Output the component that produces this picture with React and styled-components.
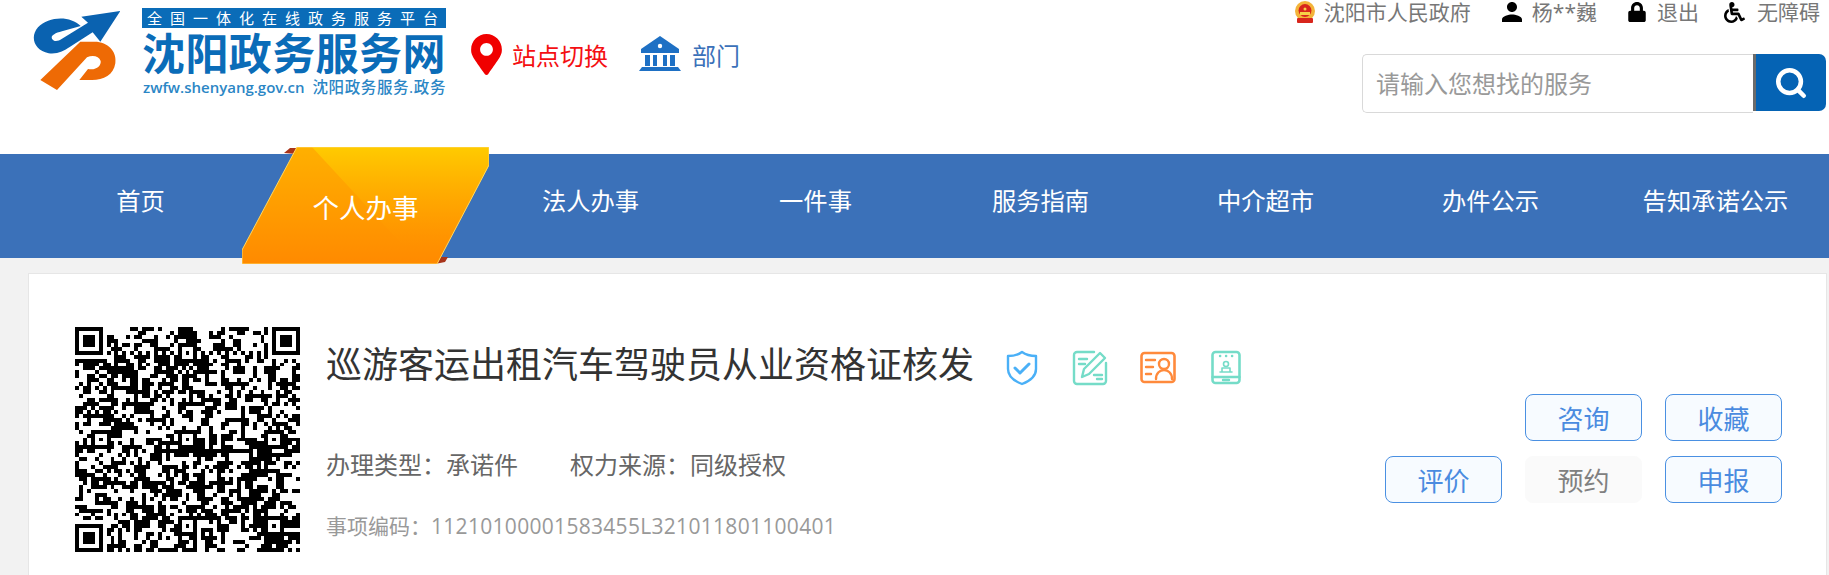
import React, { useMemo } from "react";
import styled, { createGlobalStyle } from "styled-components";
import { FaLock, FaWheelchair, FaMapMarkerAlt } from "react-icons/fa";
import { MdPerson } from "react-icons/md";
import { Search } from "lucide-react";

const Global = createGlobalStyle`
  html, body { margin: 0; padding: 0; height: 575px; overflow: hidden; background: #f2f2f2; }
  * { box-sizing: border-box; }
  body { font-family: "Open Sans", "Noto Sans CJK SC", sans-serif; }
`;

const Page = styled.div`width: 1829px; height: 575px; overflow: hidden;`;
const Header = styled.header`
  height: 154px; background: #fff; display: flex; justify-content: space-between;
  padding: 8px 3px 0 32px;
`;
const LeftGroup = styled.div`display: flex; align-items: flex-start;`;
const Logo = styled.div`display: flex; gap: 22px; width: 434px;`;
const LogoText = styled.div`display: flex; flex-direction: column; width: 304px;`;
const Banner = styled.div`
  height: 20px; background: #0a6cb8; color: #fff; font-size: 15px; line-height: 20px;
  letter-spacing: 8px; padding-left: 5px; white-space: nowrap;
`;
const SiteName = styled.div`
  font-size: 43px; line-height: 44px; font-weight: 700; color: #0a6cb8; white-space: nowrap; margin-top: 4px; letter-spacing: 0.4px;
`;
const SubLine = styled.div`
  display: flex; justify-content: space-between; color: #2b86c5; font-size: 15px; line-height: 18px;
  white-space: nowrap; margin-top: 2px; padding-left: 1px; font-weight: 600;
`;
const SubCn = styled.span`font-size: 15.5px; font-weight: 500; letter-spacing: 0.6px;`;
const SiteSwitch = styled.div`
  display: flex; align-items: center; gap: 5px; color: #f40f12; font-size: 24px; margin-top: 24px; width: 173px; height: 44px;
`;
const Dept = styled.div`
  display: flex; align-items: center; gap: 11px; color: #3b71b9; font-size: 24px; margin-top: 24px; height: 44px;
`;
const RightGroup = styled.div`display: flex; flex-direction: column; align-items: flex-end; margin-top: -8px;`;
const TopLinks = styled.div`display: flex; align-items: center; height: 24px; margin-right: 6px;`;
const TopLink = styled.span`
  display: inline-flex; align-items: center; gap: ${p => p.$gap || 8}px; color: #777; font-size: 21px; line-height: 24px;
  margin-left: ${p => p.$ml || 0}px; white-space: nowrap;
`;
const SearchBox = styled.div`display: flex; margin-top: 30px; height: 59px;`;
const SearchInput = styled.div`
  width: 391px; height: 59px; border: 1px solid #d9d9d9; border-right: none; border-radius: 5px 0 0 5px;
  color: #999; font-size: 24px; line-height: 57px; padding-left: 13px; background: #fff;
`;
const SearchBtn = styled.div`
  width: 73px; height: 57px; background: #0563b4; border-left: 3px solid #6b6b6b; border-radius: 0 7px 7px 0;
  display: flex; align-items: center; justify-content: center; color: #fff;
`;
const Nav = styled.nav`
  height: 104px; background: #3b71b9; display: grid; grid-template-columns: repeat(8, 225px); padding-left: 28px;
`;
const NavItem = styled.div`
  position: relative; display: flex; justify-content: center; align-items: center; color: #fff;
  font-size: ${p => (p.$active ? 26.5 : 24.3)}px; padding-bottom: ${p => (p.$active ? 0 : 13)}px; white-space: nowrap;
`;
const NavLabel = styled.span`position: relative; z-index: 1;`;
const ActiveShape = styled.svg`position: absolute; left: -11px; top: -7px; width: 247px; height: 117px;`;
const Main = styled.main`padding: 15px 2px 0 28px;`;
const Card = styled.section`
  height: 320px; background: #fff; border: 1px solid #e6e6e6; padding: 53px 44px 0 46px; display: flex;
`;
const QrWrap = styled.svg`width: 225px; height: 225px; flex: none; display: block;`;
const Info = styled.div`margin-left: 26px; flex: 1;`;
const TitleRow = styled.div`display: flex; align-items: center; height: 76px;`;
const Title = styled.h1`margin: 0; font-size: 36px; font-weight: 400; color: #333; line-height: 76px; white-space: nowrap;`;
const Badges = styled.div`display: flex; align-items: center; margin: 6px 0 0 30px;`;
const Badge = styled.svg`width: ${p => p.$w || 36}px; height: 36px; margin-right: ${p => p.$mr ?? 32}px; display: block; flex: none;`;
const Meta = styled.div`display: flex; gap: 52px; color: #666; font-size: 24px; line-height: 34px; margin-top: 45px;`;
const Code = styled.div`color: #999; font-size: 21px; line-height: 30px; margin-top: 29px; white-space: nowrap;`;
const CodeNumber = styled.span`letter-spacing: 0.3px;`;
const Actions = styled.div`
  width: 396px; flex: none; display: grid; grid-template-columns: repeat(3, 117px); gap: 15px 23px;
  align-content: start; justify-content: end; margin-top: 67px;
`;
const ActionBtn = styled.div`
  height: 47px; border-radius: 8px; display: flex; align-items: center; justify-content: center; font-size: 26px;
  grid-column: ${p => p.$col || "auto"};
  border: 1px solid ${p => (p.$off ? "#fafafa" : "#4a90e2")};
  background: ${p => (p.$off ? "#fafafa" : "#f7fbff")};
  color: ${p => (p.$off ? "#808080" : "#4a8be0")};
`;

function buildQr() {
  const n = 57;
  const m = Array.from({ length: n }, () => Array(n).fill(null));
  const finder = (x, y) => {
    for (let j = -1; j < 8; j++) for (let i = -1; i < 8; i++) {
      const a = x + i, b = y + j;
      if (a < 0 || b < 0 || a >= n || b >= n) continue;
      const inside = i >= 0 && i < 7 && j >= 0 && j < 7;
      const ring = i === 0 || i === 6 || j === 0 || j === 6;
      const core = i >= 2 && i <= 4 && j >= 2 && j <= 4;
      m[b][a] = inside && (ring || core);
    }
  };
  finder(0, 0); finder(n - 7, 0); finder(0, n - 7);
  for (const cy of [6, 28, 50]) for (const cx of [6, 28, 50]) {
    if ((cx === 6 && cy === 6) || (cx === 50 && cy === 6) || (cx === 6 && cy === 50)) continue;
    for (let j = -2; j <= 2; j++) for (let i = -2; i <= 2; i++) {
      m[cy + j][cx + i] = Math.max(Math.abs(i), Math.abs(j)) !== 1;
    }
  }
  for (let i = 8; i < n - 8; i++) { if (m[6][i] === null) m[6][i] = i % 2 === 0; if (m[i][6] === null) m[i][6] = i % 2 === 0; }
  let s = 20240611;
  const rnd = () => { s = (s * 1664525 + 1013904223) >>> 0; return (s >>> 16) / 65536; };
  for (let y = 0; y < n; y++) for (let x = 0; x < n; x++) {
    if (m[y][x] !== null) continue;
    const left = x > 0 ? m[y][x - 1] : false;
    const up = y > 0 ? m[y - 1][x] : false;
    const p = 0.36 + (left ? 0.14 : 0) + (up ? 0.14 : 0);
    m[y][x] = rnd() < p;
  }
  let d = "";
  for (let y = 0; y < n; y++) for (let x = 0; x < n; x++) if (m[y][x]) d += `M${x} ${y}h1v1h-1z`;
  return d;
}

const Qr = () => {
  const d = useMemo(buildQr, []);
  return (
    <QrWrap viewBox="0 0 57 57" shapeRendering="crispEdges"><rect width="57" height="57" fill="#fff" /><path d={d} fill="#000" /></QrWrap>
  );
};

const Emblem = () => (
  <svg width="88" height="84" viewBox="90 27 264 252" style={{ flex: "none", marginTop: 1 }}>
    <path d="M355 33 L238 50 L258 68 L180 116 C168 124 156 126 150 116 C146 108 156 100 180 94 L236 78 C205 46 140 48 108 82 C82 112 98 152 140 160 C165 164 187 152 202 142 L272 97 L295 125 Z" fill="#0a62b0" />
    <path d="M115 240 L235 125 L285 125 C325 130 345 160 340 190 C335 225 305 240 270 240 L232 240 L258 207 C283 212 298 197 296 183 C291 168 272 164 255 172 L165 270 Z" fill="#ee6a05" />
  </svg>
);

const BankIcon = () => (
  <svg width="42" height="36" viewBox="0 0 42 36" style={{ display: "block", flex: "none" }} fill="#1e70c4">
    <path d="M21 0 L40 13 V17 H2 V13 Z" />
    <rect x="6" y="19" width="5" height="11" />
    <rect x="14" y="19" width="4" height="11" />
    <rect x="24" y="19" width="4" height="11" />
    <rect x="31" y="19" width="5" height="11" />
    <path d="M3 31 H39 L42 35 H0 Z" />
    <circle cx="21" cy="10" r="2.2" fill="#fff" />
  </svg>
);

const NationalEmblem = () => (
  <svg width="22" height="23" viewBox="0 0 22 23" style={{ display: "block", marginRight: 8 }}>
    <circle cx="11" cy="10" r="10" fill="#f3b43a" />
    <circle cx="11" cy="9.5" r="6.5" fill="#d8261c" />
    <circle cx="11" cy="8" r="1.5" fill="#f6d048" />
    <rect x="6" y="11" width="10" height="3" fill="#f6d048" />
    <rect x="3" y="17" width="16" height="5" rx="1" fill="#d8261c" />
  </svg>
);

const ic = { fill: "none", strokeWidth: 2.4, strokeLinecap: "round", strokeLinejoin: "round" };

export default function App() {
  const navItems = ["首页", "个人办事", "法人办事", "一件事", "服务指南", "中介超市", "办件公示", "告知承诺公示"];
  return (
    <Page>
      <Global />
      <Header>
        <LeftGroup>
          <Logo>
            <Emblem />
            <LogoText>
              <Banner>全国一体化在线政务服务平台</Banner>
              <SiteName>沈阳政务服务网</SiteName>
              <SubLine>zwfw.shenyang.gov.cn<SubCn>沈阳政务服务.政务</SubCn></SubLine>
            </LogoText>
          </Logo>
          <SiteSwitch><FaMapMarkerAlt size={41} color="#f00000" />站点切换</SiteSwitch>
          <Dept><BankIcon />部门</Dept>
        </LeftGroup>
        <RightGroup>
          <TopLinks>
            <NationalEmblem />
            <TopLink>沈阳市人民政府</TopLink>
            <TopLink $ml={29} $gap={8}><MdPerson size={30} color="#000" style={{ margin: "0 -3px" }} />杨**巍</TopLink>
            <TopLink $ml={30} $gap={10}><FaLock size={20} color="#000" />退出</TopLink>
            <TopLink $ml={25} $gap={12}><FaWheelchair size={21} color="#000" />无障碍</TopLink>
          </TopLinks>
          <SearchBox>
            <SearchInput>请输入您想找的服务</SearchInput>
            <SearchBtn><Search size={34} strokeWidth={3.2} /></SearchBtn>
          </SearchBox>
        </RightGroup>
      </Header>
      <Nav>
        {navItems.map((t, i) => (
          <NavItem key={t} $active={i === 1}>
            {i === 1 && (
              <ActiveShape viewBox="0 0 247 117">
                <defs>
                  <linearGradient id="ga" x1="0" y1="0" x2="0" y2="1"><stop offset="0" stopColor="#ffb000" /><stop offset="1" stopColor="#ff8a00" /></linearGradient>
                  <linearGradient id="gb" x1="0" y1="0" x2="0" y2="1"><stop offset="0" stopColor="#ffcb00" /><stop offset="0.85" stopColor="#ff9a00" stopOpacity="0" /></linearGradient>
                </defs>
                <path d="M42 6 L48 1 L58 1 L54 7 Z" fill="#a8341a" />
                <path d="M190 110 L206 110 L203 115 L193 117 Z" fill="#a8341a" />
                <path d="M55 0 H247 V18 L195 117 H0 V103 Z" fill="url(#ga)" />
                <path d="M70 0 H247 V18 L195 117 H178 Z" fill="url(#gb)" />
                <path d="M55 0 H247 V18 L195 117 H0 V103 Z" fill="none" stroke="#ffd75e" strokeWidth="1" />
              </ActiveShape>
            )}
            <NavLabel>{t}</NavLabel>
          </NavItem>
        ))}
      </Nav>
      <Main>
        <Card>
          <Qr />
          <Info>
            <TitleRow>
              <Title>巡游客运出租汽车驾驶员从业资格证核发</Title>
              <Badges>
                <Badge viewBox="0 0 36 36" {...ic} stroke="#4ab0f7">
                  <path d="M18 2 C14 5 9 6 4 6 V19 C4 26 10 31 18 34 C26 31 32 26 32 19 V6 C27 6 22 5 18 2 Z" />
                  <path d="M11 18 L16 23 L25 14" strokeWidth="3" />
                </Badge>
                <Badge viewBox="0 0 36 36" {...ic} stroke="#75dcc8">
                  <path d="M22 2 H5 A3 3 0 0 0 2 5 V31 A3 3 0 0 0 5 34 H31 A3 3 0 0 0 34 31 V13" />
                  <path d="M7 9 H15 M7 14 H13 M22 25 H30 M25 29 H30" />
                  <path d="M28 3 L33 8 L17 24 L10 27 L12 19 Z" />
                </Badge>
                <Badge viewBox="0 0 36 36" {...ic} stroke="#ff8a3c" $mr={35}>
                  <rect x="1.5" y="3" width="33" height="29" rx="3" strokeWidth="2.6" />
                  <path d="M6 10 H15 M6 17 H13 M6 24 H11" />
                  <circle cx="24" cy="14" r="5" />
                  <path d="M16 29 C16 23 20 20 24 20 C28 20 32 23 32 29" />
                </Badge>
                <Badge viewBox="0 0 30 36" {...ic} stroke="#75dcc8" $mr={0} $w={30}>
                  <rect x="1.5" y="2" width="27" height="31" rx="3" strokeWidth="2.6" />
                  <path d="M1.5 27 H28.5 M12 30 H18 M9 6 H9.2 M15 6 H15.2 M21 6 H21.2" />
                  <circle cx="15" cy="14" r="2.5" strokeWidth="1.6" />
                  <path d="M9 22 H21 M11 18 H19 V22 H11 Z" strokeWidth="1.6" />
                </Badge>
              </Badges>
            </TitleRow>
            <Meta><span>办理类型：承诺件</span><span>权力来源：同级授权</span></Meta>
            <Code>事项编码：<CodeNumber>11210100001583455L321011801100401</CodeNumber></Code>
          </Info>
          <Actions>
            <ActionBtn $col="2">咨询</ActionBtn>
            <ActionBtn $col="3">收藏</ActionBtn>
            <ActionBtn>评价</ActionBtn>
            <ActionBtn $off>预约</ActionBtn>
            <ActionBtn>申报</ActionBtn>
          </Actions>
        </Card>
      </Main>
    </Page>
  );
}
